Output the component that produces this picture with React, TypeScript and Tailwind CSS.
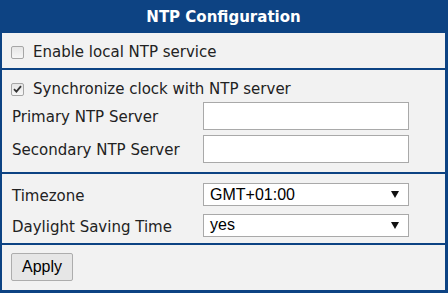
import React from 'react';

const Checkbox = ({ checked }: { checked?: boolean }) => (
    <span className="w-[13px] h-[13px] shrink-0 rounded-[2px] border border-[#a6a6a6] bg-gradient-to-b from-[#e6e6e6] to-[#f7f7f7] flex items-center justify-center">
        {checked && (
            <svg width="9" height="8" viewBox="0 0 9 8">
                <path d="M1 4.2 L3.4 6.6 L8 1.2" stroke="#333" strokeWidth="1.8" fill="none" />
            </svg>
        )}
    </span>
);

const SelectBox = ({ value }: { value: string }) => (
    <div className="h-[23px] w-[206px] bg-white border border-[#a9a9a9] flex items-center justify-between pl-[6px] pr-[9px] font-['Liberation_Sans',Arial,sans-serif] text-[16px] text-black">
        <span>{value}</span>
        <svg width="8" height="7" viewBox="0 0 8 7">
            <path d="M0 0 H8 L4 7 Z" fill="#111" />
        </svg>
    </div>
);

export default function App() {
    return (
        <div className="w-[448px] h-[293px] bg-[#0d4383] pl-[2px] pr-[3px] pb-[3px] flex flex-col gap-[2px] font-['DejaVu_Sans',Verdana,sans-serif] text-[15px] text-[#222]">
            <div className="h-[31px] flex items-center justify-center pt-[3px] text-white font-bold text-[15px]">
                NTP Configuration
            </div>

            <div className="h-[35px] bg-[#f2f2f2] flex items-center gap-[9px] pl-[9px] pt-[3px]">
                <Checkbox />
                <span>Enable local NTP service</span>
            </div>

            <div className="h-[102px] bg-[#f2f2f2] flex flex-col pt-[5px] pl-[9px]">
                <div className="h-[26px] flex items-center gap-[9px] pt-[2px]">
                    <Checkbox checked />
                    <span>Synchronize clock with NTP server</span>
                </div>
                <div className="grid grid-cols-[192px_206px] gap-y-[5px] mt-[1px]">
                    <span className="h-[28px] flex items-center pl-[1px] pt-[3px]">Primary NTP Server</span>
                    <div className="h-[28px] bg-white border border-[#a9a9a9]" />
                    <span className="h-[28px] flex items-center pl-[1px] pt-[3px]">Secondary NTP Server</span>
                    <div className="h-[28px] bg-white border border-[#a9a9a9]" />
                </div>
            </div>

            <div className="h-[69px] bg-[#f2f2f2] pt-[8px] pl-[10px]">
                <div className="grid grid-cols-[191px_206px] gap-y-[5px] items-center">
                    <span className="pt-[3px]">Timezone</span>
                    <SelectBox value="GMT+01:00" />
                    <span className="pt-[3px]">Daylight Saving Time</span>
                    <SelectBox value="yes" />
                </div>
            </div>

            <div className="flex-1 bg-[#f2f2f2] pt-[8px] pl-[9px]">
                <button className="h-[28px] w-[62px] bg-[#e6e6e6] border border-[#adadad] rounded-[2px] font-['Liberation_Sans',Arial,sans-serif] text-[16px] text-black">
                    Apply
                </button>
            </div>
        </div>
    );
}
